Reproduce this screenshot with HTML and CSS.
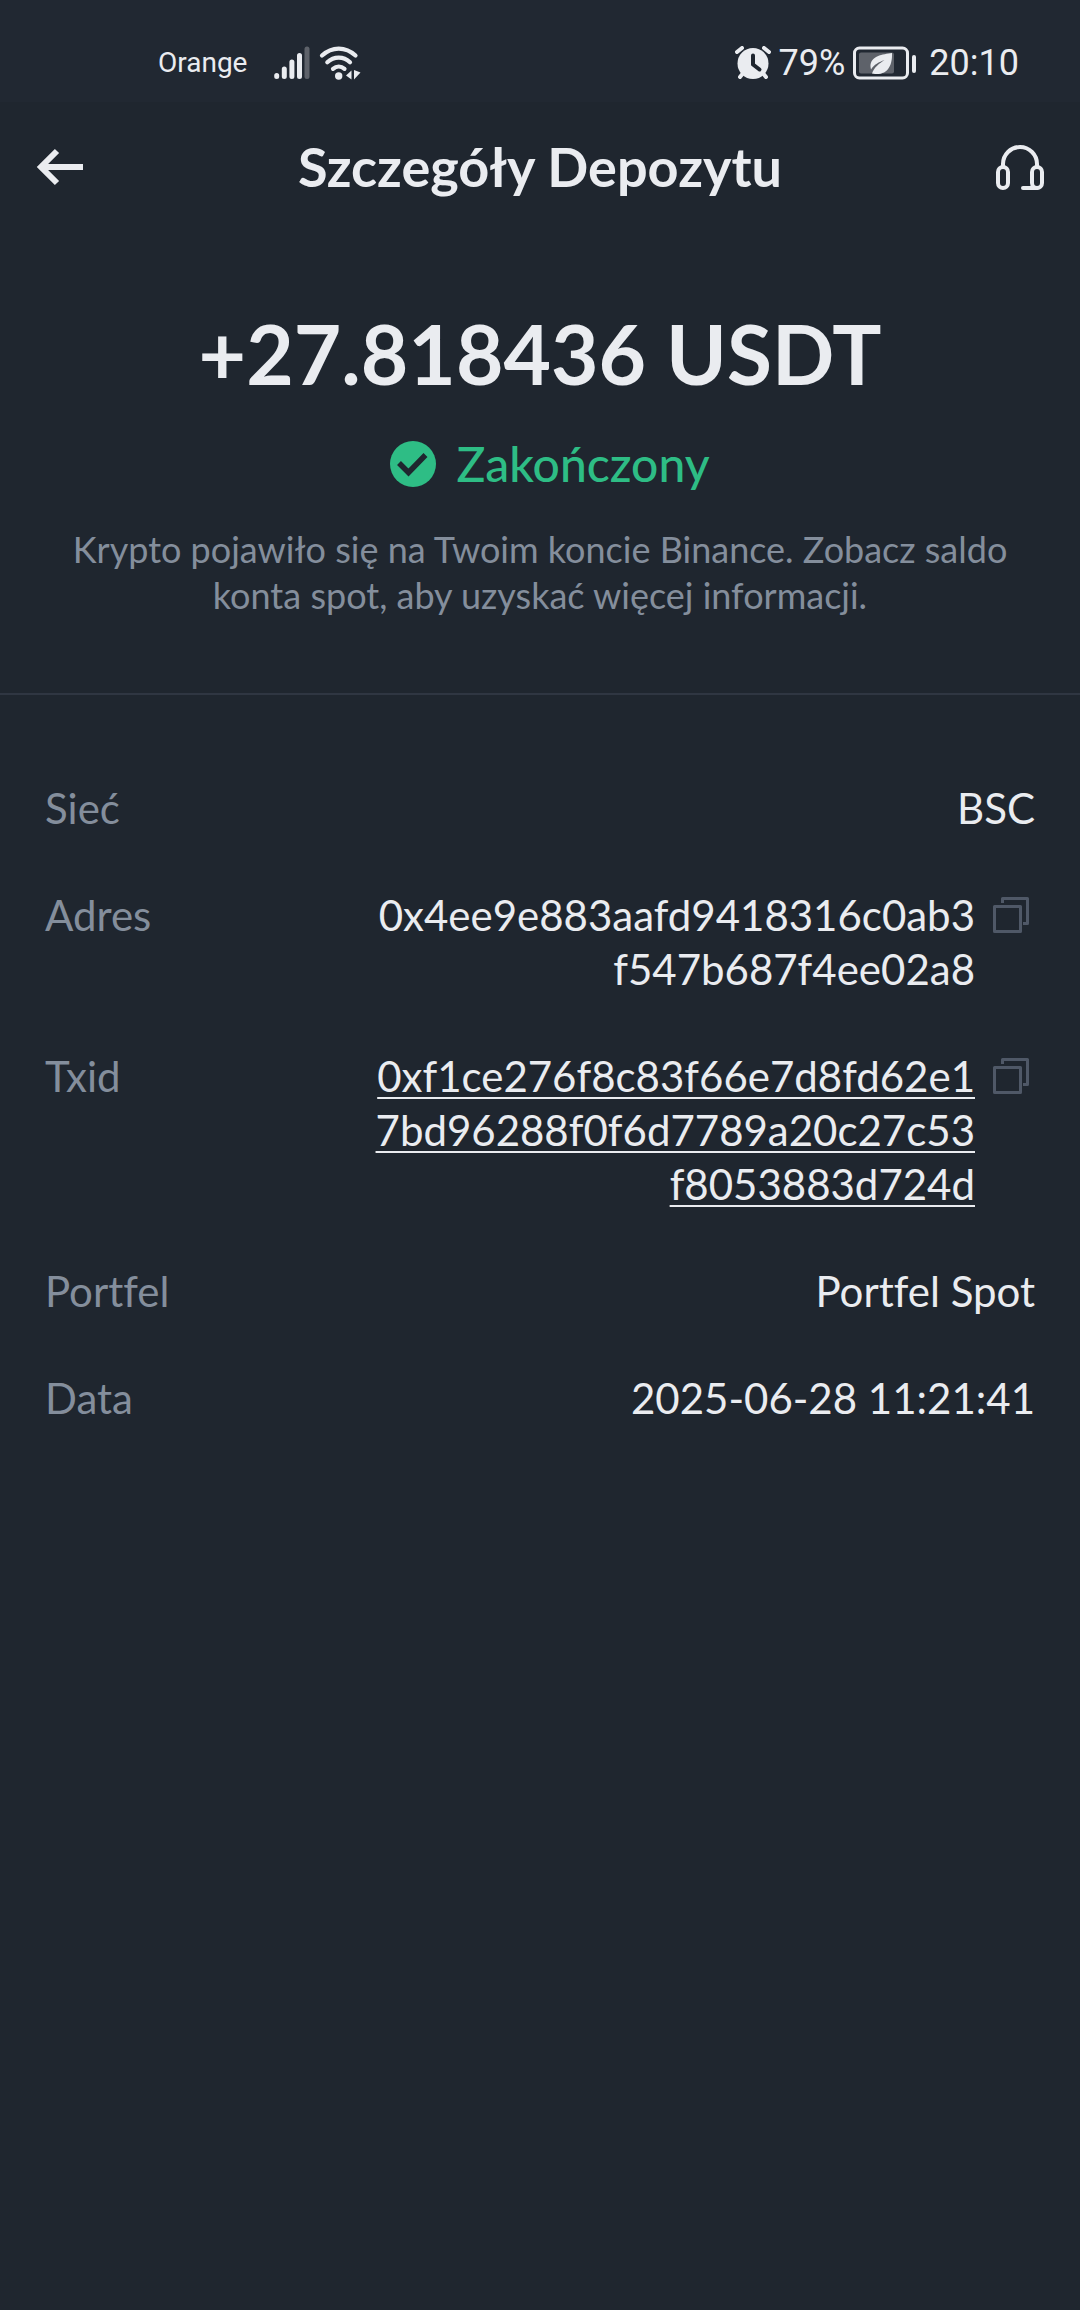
FILE: index.html
```html
<!DOCTYPE html>
<html lang="pl">
<head>
<meta charset="utf-8">
<meta name="viewport" content="width=device-width, initial-scale=1">
<title>Szczegóły Depozytu</title>
<link rel="stylesheet" href="styles.css">
</head>
<body>
<div class="status-bar">
  <div class="status-group">
    <span class="carrier">Orange</span>
    <svg class="signal-icon" width="36" height="34" viewBox="0 0 36 34" fill="none" stroke="currentColor" stroke-width="5" stroke-linecap="round" aria-hidden="true">
      <path d="M2.7 29.5v1M10.3 23v7.500M17.900 16v14.500M25.500 9.500v21"/>
      <path class="signal-off" d="M33 3v27.500"/>
    </svg>
    <svg class="wifi-icon" width="42" height="34" viewBox="0 0 42 34" aria-hidden="true">
      <g fill="none" stroke="currentColor" stroke-width="4.200" stroke-linecap="round">
        <path d="M3 9.500C13 .2 26.500 .2 36.500 9.500M8.300 16.300C15 10 24.500 10 31 16.300M14 22.800c3.500-3 8-3 11.500 0"/>
      </g>
      <circle cx="19.700" cy="30" r="3.700" fill="currentColor"/>
      <path d="M32.500 24.500v9L27 29.500zM35 24v9.500l6.500-7z" fill="currentColor"/>
    </svg>
  </div>
  <div class="status-group status-right">
    <svg width="36" height="34" viewBox="0 0 36 34" aria-hidden="true">
      <circle cx="18" cy="17.500" r="15.500" fill="currentColor"/>
      <path d="M2 6l5-4M34 6l-5-4M5 31l4-5M31 31l-4-5" stroke="currentColor" stroke-width="4" stroke-linecap="round"/>
      <path class="cutout" d="M18 9.500v9l6.500 5" fill="none" stroke-width="4" stroke-linecap="round" stroke-linejoin="round"/>
    </svg>
    <span class="status-text">79%</span>
    <svg class="battery-icon" width="64" height="34" viewBox="0 0 64 34" aria-hidden="true">
      <rect x="1.500" y="2" width="53" height="30" rx="5" fill="none" stroke="currentColor" stroke-width="3"/>
      <rect class="battery-level" x="6" y="6.500" width="35" height="21" rx="2"/>
      <path d="M61 11v14" stroke="currentColor" stroke-width="4" stroke-linecap="round"/>
      <path d="M39 7C30 8.500 17 9.500 17.500 21l.5 2.500C21 18.500 26 16 31.500 14 26.500 17.500 21 21 19 27.500l3 .5C35 29 39.500 19 39 7z" fill="currentColor"/>
    </svg>
    <time class="status-text">20:10</time>
  </div>
</div>

<header class="top-bar">
  <button class="icon-button" type="button" aria-label="Wstecz">
    <svg width="48" height="48" viewBox="0 0 48 48" fill="none" stroke="currentColor" stroke-width="6" aria-hidden="true">
      <path d="M47 24H8M21 8L5 24l16 16"/>
    </svg>
  </button>
  <h1 class="title">Szczegóły Depozytu</h1>
  <button class="icon-button" type="button" aria-label="Pomoc">
    <svg width="48" height="48" viewBox="0 0 48 48" fill="none" stroke="currentColor" stroke-width="4" aria-hidden="true">
      <path d="M7 24v-3a17 17 0 0 1 34 0v3"/>
      <rect x="2" y="24" width="10" height="21" rx="5"/>
      <rect x="36" y="24" width="10" height="21" rx="5"/>
      <path d="M41 45H27" stroke-linecap="round"/>
    </svg>
  </button>
</header>

<main>
  <section class="summary">
    <p class="amount">+27.818436 USDT</p>
    <p class="state">
      <svg width="46" height="46" viewBox="0 0 46 46" aria-hidden="true">
        <circle cx="23" cy="23" r="23" fill="currentColor"/>
        <path class="cutout" d="M9 22l9.500 9.500L35.500 14" fill="none" stroke-width="5.500"/>
      </svg>
      <span>Zakończony</span>
    </p>
    <p class="note">Krypto pojawiło się na Twoim koncie Binance. Zobacz saldo konta spot, aby uzyskać więcej informacji.</p>
  </section>

  <dl class="details">
    <div class="row">
      <dt>Sieć</dt>
      <dd>BSC</dd>
    </div>
    <div class="row">
      <dt>Adres</dt>
      <dd class="with-copy">
        <span>0x4ee9e883aafd9418316c0ab3<br>f547b687f4ee02a8</span>
        <button class="copy" type="button" aria-label="Kopiuj adres">
          <svg width="36" height="36" viewBox="0 0 36 36" fill="none" stroke="currentColor" stroke-width="3" stroke-linejoin="round" aria-hidden="true">
            <rect x="1.500" y="9.500" width="26" height="25"/>
            <path d="M9.500 6V1.500h25v25H30"/>
          </svg>
        </button>
      </dd>
    </div>
    <div class="row">
      <dt>Txid</dt>
      <dd class="with-copy">
        <a class="txid" href="#">0xf1ce276f8c83f66e7d8fd62e1<br>7bd96288f0f6d7789a20c27c53<br>f8053883d724d</a>
        <button class="copy" type="button" aria-label="Kopiuj Txid">
          <svg width="36" height="36" viewBox="0 0 36 36" fill="none" stroke="currentColor" stroke-width="3" stroke-linejoin="round" aria-hidden="true">
            <rect x="1.500" y="9.500" width="26" height="25"/>
            <path d="M9.500 6V1.500h25v25H30"/>
          </svg>
        </button>
      </dd>
    </div>
    <div class="row">
      <dt>Portfel</dt>
      <dd>Portfel Spot</dd>
    </div>
    <div class="row">
      <dt>Data</dt>
      <dd>2025-06-28 11:21:41</dd>
    </div>
  </dl>
</main>
</body>
</html>
```
FILE: styles.css
```css
:root {
  --bg: #1f262f;
  --bar: #212832;
  --text: #eaecf0;
  --muted: #848e9c;
  --line: #2f3642;
  --icon: #4f5867;
  --green: #2ebd85;
}

* {
  box-sizing: border-box;
}

body {
  margin: 0;
  min-height: 100vh;
  background: var(--bg);
  color: var(--text);
  font-family: Lato, "Open Sans", sans-serif;
  font-size: 42px;
  font-variant-ligatures: none;
  line-height: 54px;
}

h1, p, dl, dd {
  margin: 0;
}

svg {
  display: block;
  flex: none;
}

button {
  padding: 0;
  border: 0;
  background: none;
  color: inherit;
  cursor: pointer;
}

.cutout {
  stroke: var(--bg);
}

.status-bar {
  display: flex;
  justify-content: space-between;
  align-items: center;
  padding: 42px 61px 18px 158px;
  background: var(--bar);
  font-family: Roboto, sans-serif;
  line-height: 42px;
}

.status-group {
  display: flex;
  align-items: center;
}

.carrier {
  font-size: 28px;
}

.signal-icon {
  margin-left: 27px;
}

.signal-off,
.battery-level {
  opacity: 0.3;
}

.battery-level {
  fill: currentColor;
}

.wifi-icon {
  margin-left: 9px;
}

.status-right {
  gap: 8px;
}

.status-text {
  font-size: 36px;
}

.battery-icon {
  margin-right: 4px;
}

.top-bar {
  display: flex;
  justify-content: space-between;
  align-items: center;
  padding: 29px 36px 35px;
}

.icon-button {
  width: 48px;
  height: 72px;
  display: grid;
  place-items: center;
}

.title {
  font-size: 54px;
  font-weight: 700;
  line-height: 72px;
}

.summary {
  padding: 67px 48px 75px;
  border-bottom: 2px solid var(--line);
  text-align: center;
}

.amount {
  font-size: 82px;
  font-weight: 700;
  line-height: 96px;
}

.state {
  display: flex;
  justify-content: center;
  align-items: center;
  gap: 20px;
  padding: 33px 0 32px 20px;
  color: var(--green);
  font-size: 48px;
  font-weight: 500;
  line-height: 60px;
}

.note {
  color: var(--muted);
  font-size: 36px;
  line-height: 46px;
}

.details {
  display: grid;
  gap: 53px;
  padding: 86px 45px;
}

.row {
  display: flex;
  justify-content: space-between;
}

dt {
  color: var(--muted);
}

dd {
  text-align: right;
}

.with-copy {
  display: flex;
  align-items: flex-start;
  gap: 18px;
  padding-right: 6px;
}

.copy {
  padding-top: 9px;
  color: var(--icon);
}

.txid {
  color: inherit;
  text-decoration-thickness: 2px;
  text-underline-offset: 5px;
  text-decoration-skip-ink: none;
}
```
